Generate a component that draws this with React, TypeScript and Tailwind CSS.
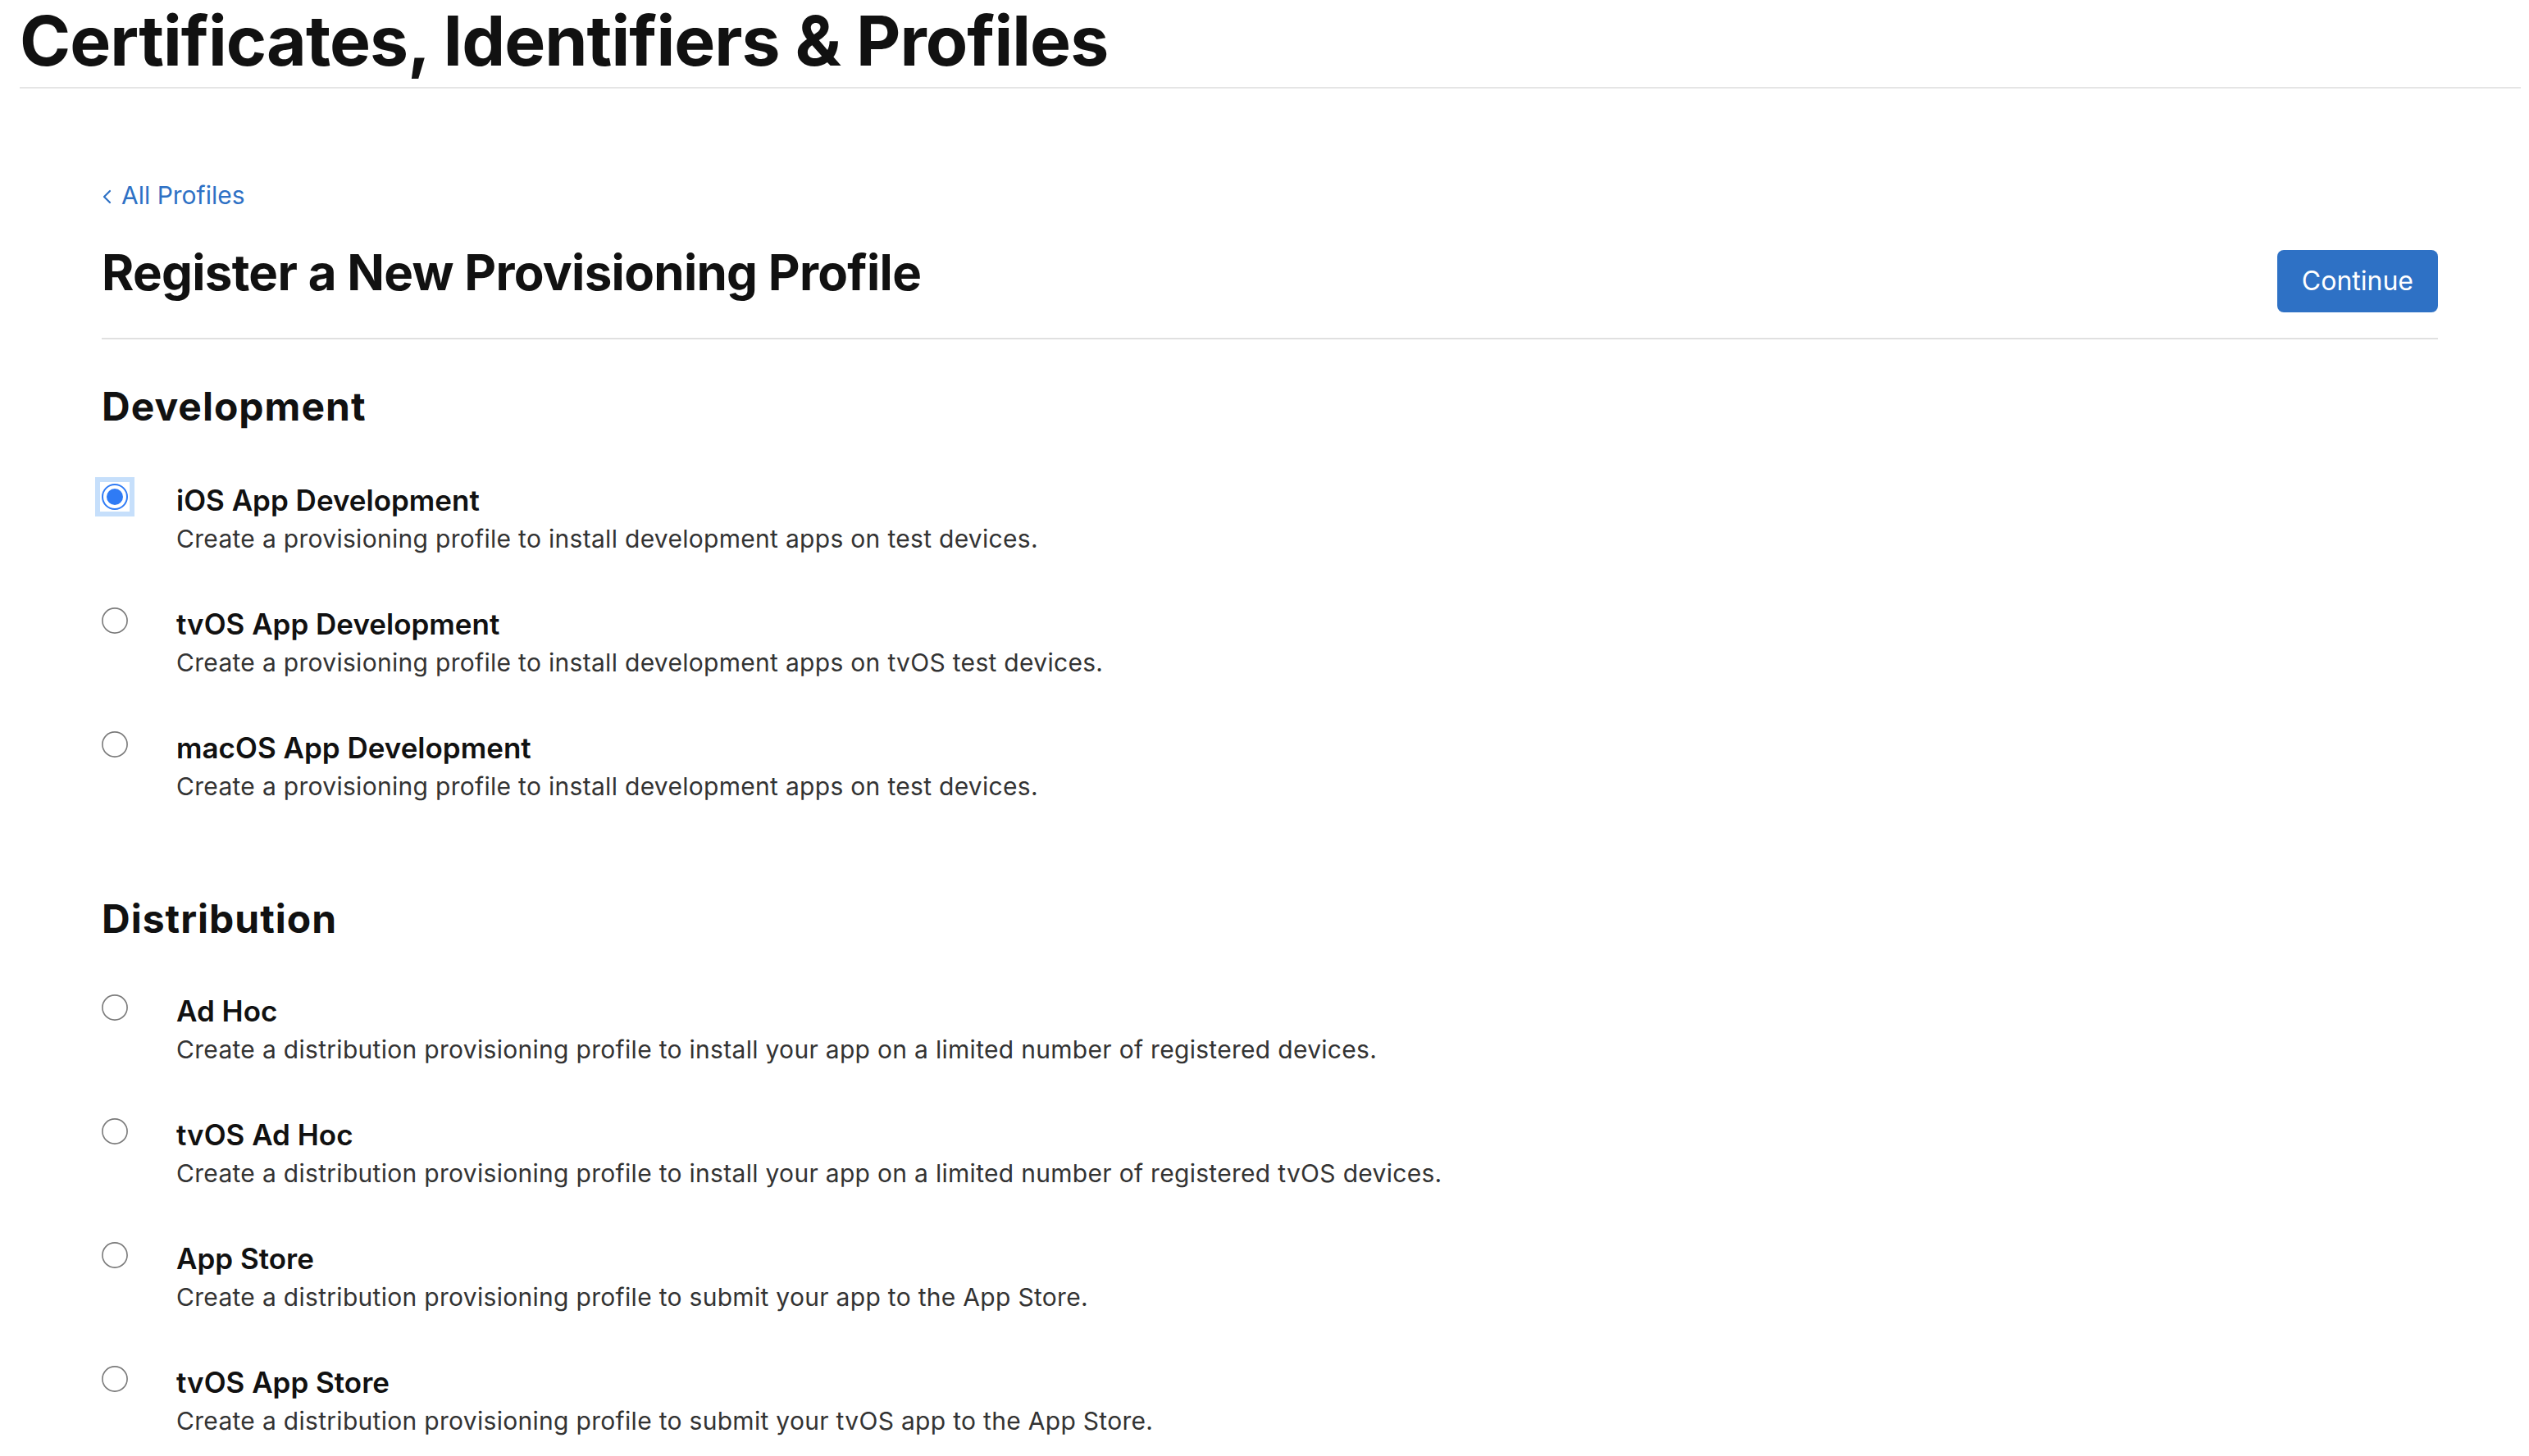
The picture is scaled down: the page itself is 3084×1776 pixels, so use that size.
import React from "react";

type Item = { title: string; desc: string; selected?: boolean };

const development: Item[] = [
  {
    title: "iOS App Development",
    desc: "Create a provisioning profile to install development apps on test devices.",
    selected: true,
  },
  {
    title: "tvOS App Development",
    desc: "Create a provisioning profile to install development apps on tvOS test devices.",
  },
  {
    title: "macOS App Development",
    desc: "Create a provisioning profile to install development apps on test devices.",
  },
];

const distribution: Item[] = [
  {
    title: "Ad Hoc",
    desc: "Create a distribution provisioning profile to install your app on a limited number of registered devices.",
  },
  {
    title: "tvOS Ad Hoc",
    desc: "Create a distribution provisioning profile to install your app on a limited number of registered tvOS devices.",
  },
  {
    title: "App Store",
    desc: "Create a distribution provisioning profile to submit your app to the App Store.",
  },
  {
    title: "tvOS App Store",
    desc: "Create a distribution provisioning profile to submit your tvOS app to the App Store.",
  },
];

function Radio({ selected }: { selected?: boolean }) {
  if (selected) {
    return (
      <div className="w-[32px] h-[32px] outline-solid outline-[6px] outline-offset-2 outline-[#c6dffb] flex items-center justify-center">
        <svg width="32" height="32" viewBox="0 0 32 32">
          <circle cx="16" cy="16" r="15" fill="white" stroke="#2f7bf5" strokeWidth="2" />
          <circle cx="16" cy="16" r="10" fill="#2f7bf5" />
        </svg>
      </div>
    );
  }
  return (
    <div className="w-[32px] h-[32px]">
      <svg width="32" height="32" viewBox="0 0 32 32">
        <circle cx="16" cy="16" r="15.1" fill="white" stroke="#7a7a7a" strokeWidth="1.6" />
      </svg>
    </div>
  );
}

function Option({ item }: { item: Item }) {
  return (
    <div className="flex items-start">
      <div className="w-[91px] shrink-0 pt-[3px]">
        <Radio selected={item.selected} />
      </div>
      <div>
        <div className="text-[35px] leading-[46px] font-semibold text-[#111111] tracking-[0px]">
          {item.title}
        </div>
        <div className="text-[30px] leading-[48px] text-[#333333] tracking-[0.3px]">
          {item.desc}
        </div>
      </div>
    </div>
  );
}

function Section({ title, items, top }: { title: string; items: Item[]; top: string }) {
  return (
    <div>
      <h2 className="text-[48px] leading-[56px] font-bold text-[#111111] tracking-[1px]">
        {title}
      </h2>
      <div className={`${top} flex flex-col gap-[57px]`}>
        {items.map((it) => (
          <Option key={it.title} item={it} />
        ))}
      </div>
    </div>
  );
}

export default function App() {
  return (
    <div
      className="min-h-screen bg-white pl-[24px] pr-[10px]"
      style={{ fontFamily: "Inter, 'Noto Sans', 'Liberation Sans', sans-serif" }}
    >
      <h1 className="text-[84px] leading-[100px] font-bold text-[#111111] tracking-[-0.95px] whitespace-nowrap">
        Certificates, Identifiers &amp; Profiles
      </h1>
      <div className="mt-[6px] h-[2px] bg-[#e5e5e5]" />

      <div className="pl-[100px] pr-[101px]">
        <a className="mt-[110px] flex items-center text-[30px] leading-[40px] text-[#2e71c5]" href="#">
          <svg width="12" height="18" viewBox="0 0 12 18" className="mr-[12px] mt-[4px]">
            <path d="M10 2 L3 9 L10 16" fill="none" stroke="#2e71c5" strokeWidth="2.2" strokeLinecap="round" strokeLinejoin="round" />
          </svg>
          All Profiles
        </a>

        <div className="mt-[38px] flex items-start justify-between h-[116px]">
          <h1 className="text-[60px] leading-[72px] font-bold text-[#111111] tracking-[-0.7px]">
            Register a New Provisioning Profile
          </h1>
          <button className="mt-[9px] h-[76px] px-[30px] rounded-[8px] bg-[#2e71c5] text-white text-[32px] leading-[40px]">
            Continue
          </button>
        </div>
        <div className="h-[2px] bg-[#e0e0e0]" />

        <div className="mt-[54px]">
          <Section title="Development" items={development} top="mt-[63px]" />
        </div>
        <div className="mt-[110px] pb-[80px]">
          <Section title="Distribution" items={distribution} top="mt-[61px]" />
        </div>
      </div>
    </div>
  );
}
